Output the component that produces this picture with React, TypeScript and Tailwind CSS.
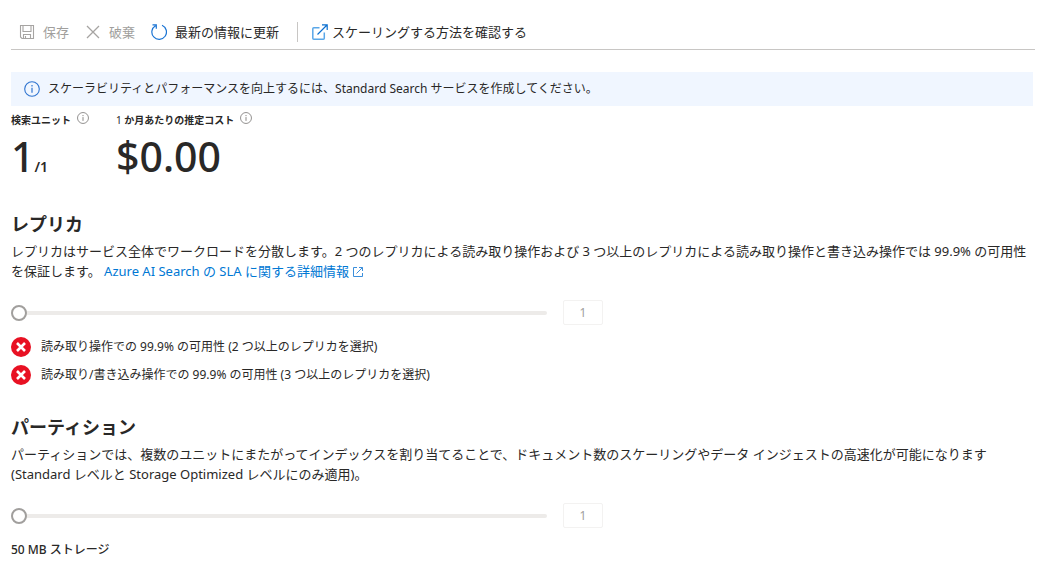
import React, { useState } from "react";

function SaveIcon() {
  return (
    <svg className="size-4" viewBox="0 0 16 16" fill="none" stroke="#a6a4a2" strokeWidth="1.1" aria-hidden="true">
      <path d="M1.5 1.5h13v13H3L1.5 13zM4 1.5v6h8v-6M4.5 14.5v-4h7v4M6.5 12v2.5" />
    </svg>
  );
}

function DiscardIcon() {
  return (
    <svg className="size-4" viewBox="0 0 16 16" fill="none" stroke="#a6a4a2" strokeWidth="1.3" aria-hidden="true">
      <path d="M2 2l12 12M14 2L2 14" />
    </svg>
  );
}

function RefreshIcon() {
  return (
    <svg className="size-4" viewBox="0 0 16 16" fill="none" stroke="#1a74d4" strokeWidth="1.2" aria-hidden="true">
      <path d="M11 1.300a7.300 7.300 0 1 1-6.500.4M1.500.8h3.800v4" />
    </svg>
  );
}

function OpenIcon() {
  return (
    <svg className="size-4" viewBox="0 0 16 16" fill="none" aria-hidden="true">
      <path d="M7.500 3.700H1.800q-1 0-1 1v9.500q0 1 1 1h9.500q1 0 1-1V8.500" stroke="#5aa7e8" strokeWidth="1.500" />
      <path d="M5.500 10.500L15 1M10 .8h5.200V6" stroke="#0b6fd0" strokeWidth="1.200" />
    </svg>
  );
}

function SmallOpenIcon() {
  return (
    <svg className="ml-1 inline-block size-[10px] align-[-1px]" viewBox="0 0 10 10" fill="none" stroke="#3b8edb" aria-hidden="true">
      <path d="M4 .5H.5v9h9V6M3.500 6.500l6-6M6 .5h3.500V4" />
    </svg>
  );
}

function InfoIcon({ className, color }: { className: string; color: string }) {
  return (
    <svg className={className} viewBox="0 0 16 16" fill="none" stroke={color} aria-hidden="true">
      <circle cx="8" cy="8" r="7.300" strokeWidth="1.100" />
      <path d="M8 6.800v5M8 4v1.500" strokeWidth="1.200" />
    </svg>
  );
}

function ErrorIcon() {
  return (
    <svg className="size-5 shrink-0" viewBox="0 0 20 20" aria-hidden="true">
      <circle cx="10" cy="10" r="10" fill="#e81123" />
      <path d="M6 6l8 8M14 6l-8 8" stroke="#fff" strokeWidth="2.600" />
    </svg>
  );
}

function UnitSlider({ label }: { label: string }) {
  const [value, setValue] = useState(1);
  return (
    <div className="mt-[19px] flex max-w-[592px] items-center gap-4">
      <input
        type="range"
        aria-label={label}
        min={1}
        max={12}
        value={value}
        onChange={(e) => setValue(Number(e.target.value))}
        className="h-4 min-w-0 flex-1 appearance-none bg-transparent [&::-webkit-slider-runnable-track]:h-1 [&::-webkit-slider-runnable-track]:rounded-full [&::-webkit-slider-runnable-track]:bg-[#edebe9] [&::-webkit-slider-thumb]:-mt-[6px] [&::-webkit-slider-thumb]:size-4 [&::-webkit-slider-thumb]:appearance-none [&::-webkit-slider-thumb]:rounded-full [&::-webkit-slider-thumb]:border-2 [&::-webkit-slider-thumb]:border-solid [&::-webkit-slider-thumb]:border-[#a19f9d] [&::-webkit-slider-thumb]:bg-white"
      />
      <input
        type="text"
        aria-label={`${label}の数`}
        value={value}
        disabled
        className="h-[25px] w-10 rounded-xs border border-[#f3f2f1] bg-white text-center text-xs text-[#a19f9d]"
      />
    </div>
  );
}

function Stat({ label, children }: { label: React.ReactNode; children: React.ReactNode }) {
  return (
    <div>
      <div className="flex h-7 items-center gap-[6px] text-[10px] font-semibold">
        <span>{label}</span>
        <InfoIcon className="mb-1 size-3" color="#7d7b79" />
      </div>
      <div className="text-[41px] leading-[44px] font-medium">{children}</div>
    </div>
  );
}

export default function App() {
  return (
    <main className="bg-white pr-[18px] pl-[11px] font-['Noto_Sans','Noto_Sans_CJK_JP',sans-serif] text-[13px] leading-5 text-[#292827]" lang="ja">
      <div className="flex h-[50px] items-end border-b border-[#c8c6c4] pb-[7px] pl-2">
        <div className="flex items-center" role="toolbar" aria-label="コマンド">
          <button type="button" disabled className="flex items-center gap-2 text-[#a19f9d]">
            <SaveIcon />
            保存
          </button>
          <button type="button" disabled className="ml-4 flex items-center gap-2 text-[#a19f9d]">
            <DiscardIcon />
            破棄
          </button>
          <button type="button" className="ml-4 flex items-center gap-2">
            <RefreshIcon />
            最新の情報に更新
          </button>
          <div className="ml-[18px] h-5 w-px bg-[#c8c6c4]" />
          <a href="#scale" className="ml-[14px] flex items-center gap-1">
            <OpenIcon />
            スケーリングする方法を確認する
          </a>
        </div>
      </div>

      <div className="mt-[22px] mr-[2px] flex min-h-[34px] items-center gap-2 bg-[#f0f6ff] px-[13px] text-xs">
        <InfoIcon className="size-4 shrink-0" color="#2f74d0" />
        スケーラビリティとパフォーマンスを向上するには、Standard Search サービスを作成してください。
      </div>

      <div className="flex gap-[27px]">
        <Stat label="検索ユニット">
          1<span className="text-sm font-semibold">/1</span>
        </Stat>
        <Stat label={<><span className="font-normal">1</span> か月あたりの推定コスト</>}>$0.00</Stat>
      </div>

      <section className="mt-[34px]">
        <h2 className="text-lg leading-6 font-semibold">レプリカ</h2>
        <p className="mt-[5px]">
          レプリカはサービス全体でワークロードを分散します。2 つのレプリカによる読み取り操作および 3 つ以上のレプリカによる読み取り操作と書き込み操作では 99.9% の可用性を保証します。{" "}
          <a href="#sla" className="text-[#0078d4]">
            Azure AI Search の SLA に関する詳細情報
            <SmallOpenIcon />
          </a>
        </p>
        <UnitSlider label="レプリカ" />
        <ul className="mt-3 flex flex-col gap-2 text-xs leading-5">
          <li className="flex gap-[10px]">
            <ErrorIcon />
            読み取り操作での 99.9% の可用性 (2 つ以上のレプリカを選択)
          </li>
          <li className="flex gap-[10px]">
            <ErrorIcon />
            読み取り/書き込み操作での 99.9% の可用性 (3 つ以上のレプリカを選択)
          </li>
        </ul>
      </section>

      <section className="mt-[30px]">
        <h2 className="text-lg leading-6 font-semibold">パーティション</h2>
        <p className="mt-[5px]">
          パーティションでは、複数のユニットにまたがってインデックスを割り当てることで、ドキュメント数のスケーリングやデータ インジェストの高速化が可能になります (Standard レベルと Storage Optimized レベルにのみ適用)。
        </p>
        <UnitSlider label="パーティション" />
        <p className="mt-3 text-xs leading-5 font-medium">50 MB ストレージ</p>
      </section>
    </main>
  );
}
